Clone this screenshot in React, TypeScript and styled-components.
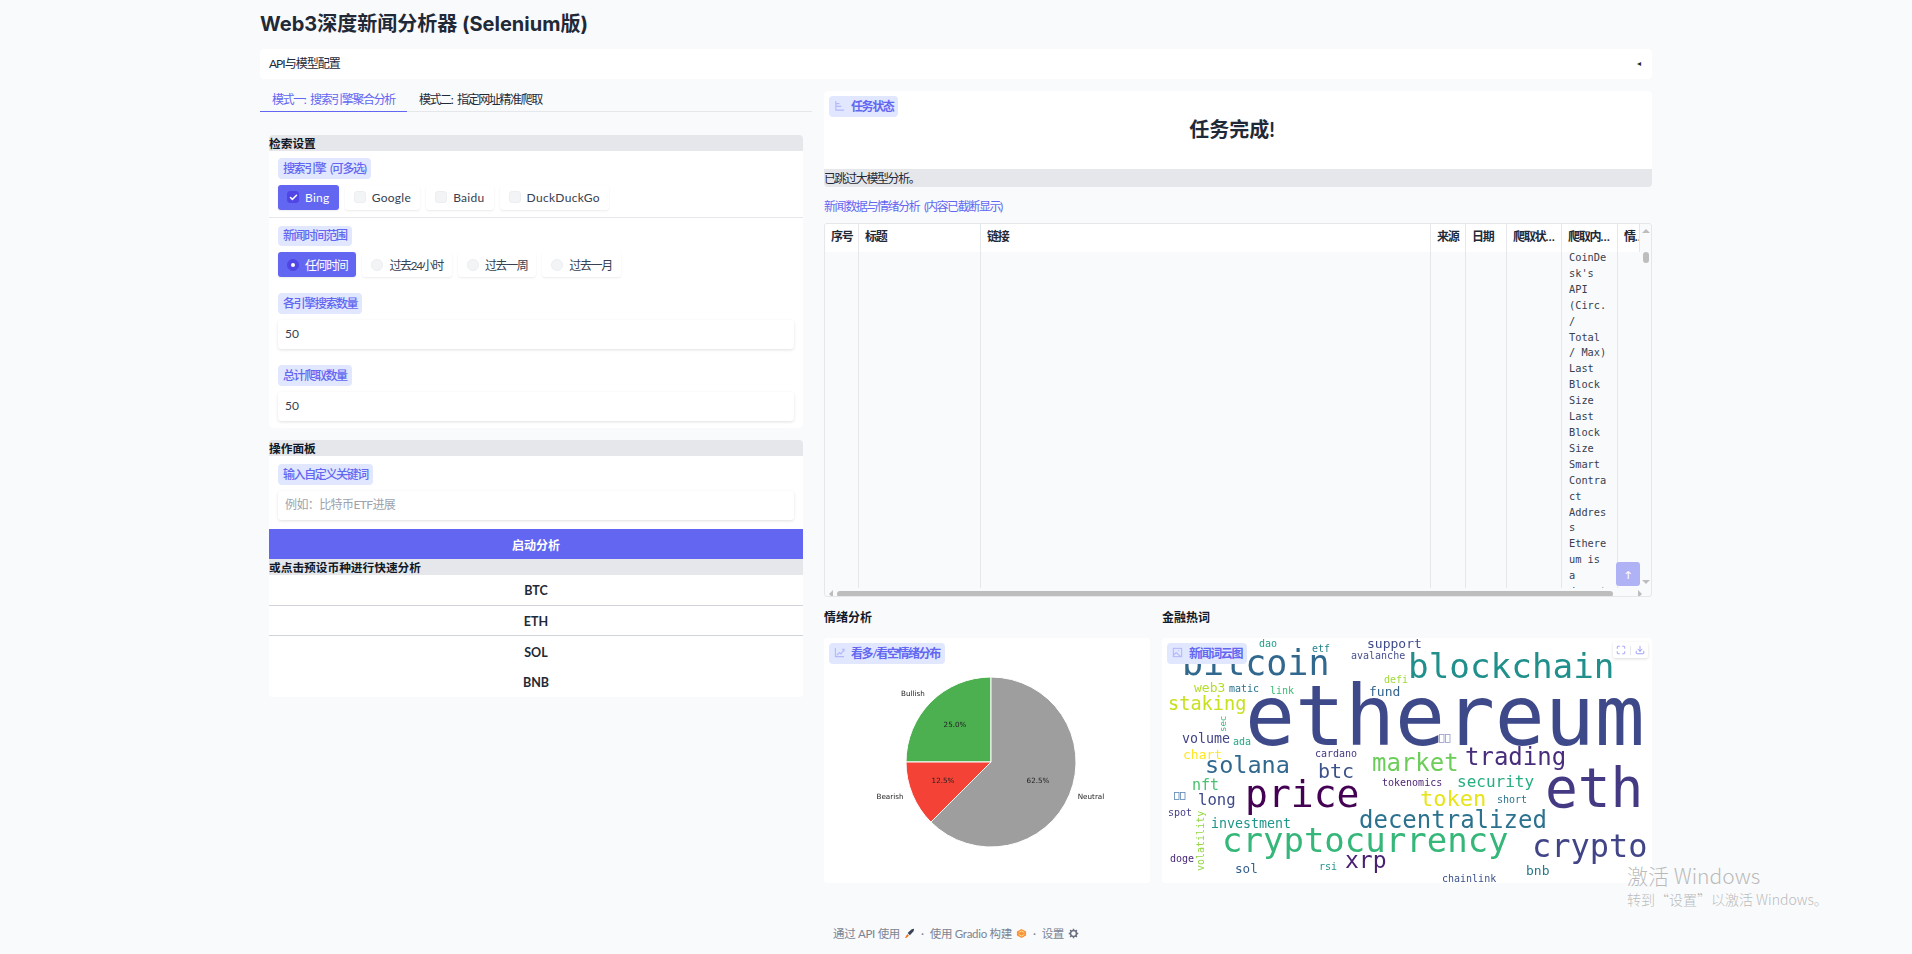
import React from 'react';
import styled, { createGlobalStyle } from 'styled-components';
import { Check, Download, Maximize } from 'lucide-react';

const BASE_FONT = `Lato, "Noto Sans CJK SC", sans-serif`;
const PRIMARY = '#6366f1';
const LABEL_BG = '#e0e7ff';
const HEADER_BG = '#e5e7eb';
const TEXT = '#1f2937';
// the reference squeezes its CJK glyphs tighter than their natural advance
const CJK_SQUEEZE = 'letter-spacing: -1.4px; word-spacing: 3px;';

const ENGINES = [
  { name: 'Bing', checked: true },
  { name: 'Google', checked: false },
  { name: 'Baidu', checked: false },
  { name: 'DuckDuckGo', checked: false },
];

const RANGES = [
  { name: '任何时间', checked: true },
  { name: '过去24小时', checked: false },
  { name: '过去一周', checked: false },
  { name: '过去一月', checked: false },
];

const COINS = ['BTC', 'ETH', 'SOL', 'BNB'];

const COLUMNS = ['序号', '标题', '链接', '来源', '日期', '爬取状态', '爬取内容', '情绪'];

const CRAWLED_TEXT =
  "CoinDesk's API (Circ. / Total / Max) Last Block Size Last Block Size Smart Contract Address Ethereum is a decentralized";

const WORDS = [
  { t: 'ethereum', x: 83, y: 107, s: 83, c: '#3e4989' },
  { t: 'bitcoin', x: 20, y: 37, s: 35, c: '#31688e' },
  { t: 'blockchain', x: 246, y: 40, s: 34.3, c: '#21908c' },
  { t: 'eth', x: 383, y: 169, s: 54.5, c: '#443a83' },
  { t: 'price', x: 83, y: 169, s: 38, c: '#440154' },
  { t: 'cryptocurrency', x: 60, y: 214, s: 34, c: '#35b779' },
  { t: 'crypto', x: 370, y: 219, s: 32, c: '#414487' },
  { t: 'decentralized', x: 197, y: 190, s: 24, c: '#2c728e' },
  { t: 'trading', x: 303, y: 127, s: 24, c: '#472d7b' },
  { t: 'market', x: 210, y: 133, s: 24, c: '#6ccd5a' },
  { t: 'solana', x: 43, y: 135, s: 23.5, c: '#31688e' },
  { t: 'btc', x: 156, y: 140, s: 20, c: '#3b518b' },
  { t: 'token', x: 258, y: 168, s: 22, c: '#e7e419' },
  { t: 'xrp', x: 183, y: 230, s: 23, c: '#482173' },
  { t: 'staking', x: 6, y: 72, s: 18.6, c: '#c8e020' },
  { t: 'fund', x: 207, y: 58, s: 13, c: '#33638d' },
  { t: 'web3', x: 32, y: 54, s: 13, c: '#b5de2b' },
  { t: 'security', x: 295, y: 149, s: 16, c: '#26ad81' },
  { t: 'long', x: 36, y: 167, s: 15.6, c: '#3e4989' },
  { t: 'nft', x: 30, y: 152, s: 15, c: '#4ac16d' },
  { t: 'support', x: 205, y: 10, s: 13, c: '#3e4a89' },
  { t: 'volume', x: 20, y: 105, s: 13.3, c: '#414487' },
  { t: 'investment', x: 49, y: 190, s: 13.3, c: '#1f968b' },
  { t: 'bnb', x: 364, y: 237, s: 13, c: '#2a788e' },
  { t: 'sol', x: 73, y: 235, s: 12.6, c: '#35608d' },
  { t: 'chart', x: 21, y: 121, s: 13, c: '#fde725' },
  { t: 'avalanche', x: 189, y: 21, s: 10, c: '#46508e' },
  { t: 'dao', x: 97, y: 9, s: 10, c: '#1f9e89' },
  { t: 'etf', x: 150, y: 14, s: 10, c: '#26828e' },
  { t: 'defi', x: 222, y: 45, s: 10, c: '#a0da39' },
  { t: 'matic', x: 67, y: 54, s: 10, c: '#2c728e' },
  { t: 'link', x: 108, y: 56, s: 10, c: '#3dbc74' },
  { t: 'ada', x: 71, y: 107, s: 10, c: '#22a884' },
  { t: 'cardano', x: 153, y: 119, s: 10, c: '#443983' },
  { t: 'tokenomics', x: 220, y: 148, s: 10, c: '#481f70' },
  { t: 'short', x: 335, y: 165, s: 10, c: '#2c728e' },
  { t: 'spot', x: 6, y: 178, s: 10, c: '#433e85' },
  { t: 'doge', x: 8, y: 224, s: 10, c: '#482878' },
  { t: 'rsi', x: 157, y: 232, s: 10, c: '#1f968b' },
  { t: 'chainlink', x: 280, y: 244, s: 10, c: '#3b528b' },
];

const GlobalStyle = createGlobalStyle`
  html, body {
    margin: 0;
    background: #f9fafb;
  }

  body {
    font-family: ${BASE_FONT};
    color: ${TEXT};
  }

  * {
    box-sizing: border-box;
  }
`;

const Page = styled.div`
  position: relative;
  width: 1912px;
  height: 954px;
  overflow: hidden;
  padding: 10px 260px 0;
`;

const Title = styled.h1`
  margin: 0 0 11px;
  height: 28px;
  font-family: Inter, "Noto Sans CJK SC", sans-serif;
  font-size: 20px;
  line-height: 28px;
  font-weight: 700;
  color: ${TEXT};
`;

const Accordion = styled.div`
  display: flex;
  justify-content: space-between;
  align-items: center;
  height: 30px;
  padding: 0 9px 3px;
  background: #fff;
  border-radius: 4px;
  font-size: 12px;
  letter-spacing: -1px;
`;

const Caret = styled.span`
  font-size: 8px;
  margin-right: 3px;
`;

const Columns = styled.div`
  display: grid;
  grid-template-columns: 552px 828px;
  gap: 12px;
  margin-top: 12px;
`;

const Tabs = styled.div`
  display: flex;
  height: 21px;
  border-bottom: 1px solid ${HEADER_BG};
`;

const Tab = styled.div<{ $active?: boolean }>`
  height: 21px;
  padding: 1px 12px 0;
  font-size: 12px;
  line-height: 16px;
  ${CJK_SQUEEZE}
  color: ${(p) => (p.$active ? PRIMARY : TEXT)};
  border-bottom: 1px solid ${(p) => (p.$active ? PRIMARY : 'transparent')};
`;

const TabPanel = styled.div`
  padding: 23px 9px 0;
`;

const SectionHeader = styled.div<{ $flat?: boolean }>`
  height: 16px;
  background: ${HEADER_BG};
  font-size: 11.7px;
  line-height: 16px;
  font-weight: 700;
  color: #111827;
  border-radius: ${(p) => (p.$flat ? '0' : '4px 4px 0 0')};
`;

const Group = styled.div`
  background: #fff;
  padding: 7px 9px 7px;
  margin-bottom: 12px;
  border-radius: 0 0 4px 4px;
`;

const Field = styled.div`
  display: flex;
  flex-direction: column;
  align-items: flex-start;
  gap: 6px;
  margin-bottom: 16px;

  &:last-child {
    margin-bottom: 0;
  }
`;

const Separated = styled.div`
  margin: 7px -9px 8px;
  height: 1px;
  background: ${HEADER_BG};
`;

const Label = styled.span`
  display: inline-flex;
  align-items: center;
  height: 20.5px;
  padding: 0 5px 2px;
  background: ${LABEL_BG};
  color: ${PRIMARY};
  font-size: 12px;
  font-weight: 500;
  ${CJK_SQUEEZE}
  border-radius: 4px;
`;

const Options = styled.div`
  display: flex;
  gap: 6px;
`;

const Option = styled.div<{ $checked?: boolean; $latin?: boolean }>`
  display: flex;
  align-items: center;
  gap: 6px;
  height: 25px;
  padding: 0 9px;
  font-size: 12px;
  ${(p) => (p.$latin ? 'letter-spacing: 0.3px;' : CJK_SQUEEZE)}
  border-radius: 3px;
  background: ${(p) => (p.$checked ? PRIMARY : '#fff')};
  color: ${(p) => (p.$checked ? '#fff' : '#374151')};
  box-shadow: 0 1px 2px rgba(0, 0, 0, 0.08);
`;

const Tick = styled.span<{ $checked?: boolean; $round?: boolean }>`
  display: flex;
  align-items: center;
  justify-content: center;
  width: 12px;
  height: 12px;
  border-radius: ${(p) => (p.$round ? '50%' : '3px')};
  background: ${(p) => (p.$checked ? '#4f46e5' : '#f3f4f6')};
  border: 1px solid ${(p) => (p.$checked ? '#4f46e5' : '#eceef2')};
  color: #fff;
`;

const Dot = styled.span`
  width: 4px;
  height: 4px;
  border-radius: 50%;
  background: #fff;
`;

const TextInput = styled.input`
  width: 100%;
  height: 29.5px;
  padding: 0 7px 2px;
  border: none;
  outline: none;
  border-radius: 3px;
  background: #fff;
  font-family: ${BASE_FONT};
  font-size: 12px;
  color: #374151;
  box-shadow: 0 1px 3px rgba(0, 0, 0, 0.12);

  &::placeholder {
    color: #9ca3af;
    opacity: 1;
    letter-spacing: -0.6px;
  }
`;

const ActionBody = styled.div`
  background: #fff;
  padding: 8px 9px 9px;
`;

const PrimaryButton = styled.button`
  display: block;
  width: 100%;
  height: 30px;
  border: none;
  background: ${PRIMARY};
  color: #fff;
  font-family: ${BASE_FONT};
  font-size: 12px;
  font-weight: 700;
`;

const CoinList = styled.div`
  background: #fff;
  border-radius: 0 0 4px 4px;
`;

const CoinRow = styled.div<{ $divided?: boolean }>`
  display: flex;
  align-items: center;
  justify-content: center;
  height: 30.5px;
  padding-top: 2px;
  font-size: 12.5px;
  font-weight: 700;
  border-bottom: ${(p) => (p.$divided ? '1px solid #d1d5db' : 'none')};
`;

const StatusCard = styled.div`
  position: relative;
  height: 78px;
  padding: 24px 12px 0 0;
  background: #fff;
  border-radius: 4px 4px 0 0;
`;

const Floating = styled(Label)`
  position: absolute;
  top: 5px;
  left: 5px;
  gap: 6px;
  padding: 0 5px 1px 5px;
  font-weight: 600;
  z-index: 1;
`;

const LabelIcon = styled.svg`
  width: 11px;
  height: 11px;
  fill: none;
  stroke: #b4b8fb;
  stroke-width: 1.2;
`;

const Done = styled.h2`
  margin: 0;
  text-align: center;
  font-size: 20px;
  line-height: 28px;
  font-weight: 700;
  color: ${TEXT};
`;

const SkipNote = styled.div`
  height: 18px;
  background: ${HEADER_BG};
  font-size: 12px;
  line-height: 19px;
  ${CJK_SQUEEZE}
  border-radius: 0 0 4px 4px;
`;

const TableCaption = styled.div`
  margin: 12px 0 8px;
  height: 16px;
  font-size: 12px;
  line-height: 16px;
  ${CJK_SQUEEZE}
  color: ${PRIMARY};
`;

const TableFrame = styled.div`
  position: relative;
  height: 374px;
  border: 1px solid ${HEADER_BG};
  border-radius: 3px;
  overflow: hidden;
`;

const TableGrid = styled.div`
  display: grid;
  grid-template-columns: 34px 122px 450px 35px 41px 55px 56px 22px;
  width: 815px;
`;

const HeadCell = styled.div`
  height: 28px;
  padding: 0 6px;
  background: #fff;
  font-size: 12px;
  line-height: 26px;
  font-weight: 700;
  letter-spacing: -1.2px;
  white-space: nowrap;
  overflow: hidden;
  text-overflow: ellipsis;
  border-right: 1px solid ${HEADER_BG};

  &:first-child {
    padding-right: 0;
  }

  &:last-child {
    padding-right: 0;
    text-overflow: clip;
    border-right: none;
  }
`;

const BodyCell = styled.div`
  height: 336px;
  padding: 0 6px 0 7px;
  overflow: hidden;
  overflow-wrap: anywhere;
  font-family: "DejaVu Sans Mono", monospace;
  font-size: 10.3px;
  line-height: 15.9px;
  color: #374151;
  border-right: 1px solid ${HEADER_BG};

  &:last-child {
    border-right: none;
  }
`;

const CellText = styled.div`
  margin-top: -2px;
`;

const HorizontalBar = styled.div`
  height: 8px;
  margin-top: 2px;
  display: flex;
  align-items: center;
  gap: 4px;
  padding: 0 0 0 4px;
`;

const HorizontalThumb = styled.div`
  width: 776px;
  height: 6px;
  border-radius: 3px;
  background: #bdbdbd;
`;

const Arrow = styled.span<{ $dir: 'left' | 'right' | 'up' | 'down' }>`
  width: 0;
  height: 0;
  border: 4px solid transparent;
  ${(p) => (p.$dir === 'left' ? 'border-right-color: #bdbdbd; border-left: none;' : '')}
  ${(p) => (p.$dir === 'right' ? 'border-left-color: #bdbdbd; border-right: none;' : '')}
  ${(p) => (p.$dir === 'up' ? 'border-bottom-color: #bdbdbd; border-top: none;' : '')}
  ${(p) => (p.$dir === 'down' ? 'border-top-color: #bdbdbd; border-bottom: none;' : '')}
`;

const RightArrow = styled(Arrow)`
  margin-left: 21px;
`;

const VerticalBar = styled.div`
  position: absolute;
  top: 0;
  right: 0;
  width: 10px;
  height: 365px;
  display: flex;
  flex-direction: column;
  align-items: center;
  justify-content: space-between;
  padding: 5px 0;
  background: #f9fafb;
`;

const VerticalThumb = styled.div`
  position: absolute;
  top: 28px;
  left: 2px;
  width: 6px;
  height: 11px;
  border-radius: 3px;
  background: #bdbdbd;
`;

const ScrollTopButton = styled.div`
  position: absolute;
  right: 11px;
  top: 338px;
  width: 24px;
  height: 24px;
  display: flex;
  align-items: center;
  justify-content: center;
  border-radius: 3px;
  background: #b0b2f6;
  color: #fff;
  font-size: 9px;
  font-weight: 700;
`;

const Charts = styled.div`
  display: grid;
  grid-template-columns: 326px 490px;
  gap: 12px;
  margin-top: 12px;
`;

const ChartTitle = styled.div`
  height: 18px;
  margin-bottom: 11px;
  font-size: 12px;
  line-height: 18px;
  font-weight: 700;
  color: #111827;
`;

const ChartCard = styled.div`
  position: relative;
  height: 245px;
  background: #fff;
  border-radius: 3px;
  overflow: hidden;
`;

const ChartSvg = styled.svg`
  display: block;
  filter: blur(0.35px);
`;

const PieLabel = styled.text`
  font-family: "DejaVu Sans", sans-serif;
  font-size: 7.2px;
  fill: #222;
  text-anchor: middle;
  dominant-baseline: middle;
`;

const CloudWord = styled.text`
  font-family: "DejaVu Sans Mono", monospace;
`;

const CloudTools = styled.div`
  position: absolute;
  top: 4px;
  right: 4px;
  display: flex;
  align-items: center;
  gap: 4px;
  height: 16px;
  padding: 0 3px;
  background: #fff;
  color: #8b8ef5;
  border-radius: 2px;
  box-shadow: 0 1px 3px rgba(0, 0, 0, 0.14);
`;

const ToolDivider = styled.span`
  width: 1px;
  height: 9px;
  background: #e5e7eb;
`;

const Footer = styled.footer`
  display: flex;
  align-items: center;
  justify-content: center;
  gap: 6px;
  width: 100%;
  margin-top: 41px;
  height: 18px;
  font-size: 11.5px;
  letter-spacing: -0.3px;
  color: #7c8493;
`;

const FooterLink = styled.span`
  display: inline-flex;
  align-items: center;
  gap: 4px;
`;

const Watermark = styled.div`
  position: absolute;
  left: 1627px;
  top: 860px;
  color: rgba(120, 120, 120, 0.5);
  font-family: "Noto Sans CJK SC", sans-serif;
  font-weight: 300;
`;

const WatermarkTitle = styled.div`
  font-size: 21px;
  line-height: 30px;
`;

const WatermarkHint = styled.div`
  font-size: 14px;
  line-height: 19px;
`;

const BarsIcon = () => (
  <LabelIcon viewBox="0 0 12 12">
    <path d="M2 1v10h9M2 4h4M2 7h6" />
  </LabelIcon>
);

const TrendIcon = () => (
  <LabelIcon viewBox="0 0 12 12">
    <path d="M1.5 1v9.5H11M3 9l3-3 1.5 1.5L11 3M8.5 2.5H11V5" />
  </LabelIcon>
);

const PictureIcon = () => (
  <LabelIcon viewBox="0 0 12 12">
    <rect x="1.5" y="1.5" width="9" height="9" />
    <path d="M1.5 9l3-3 5 4.5M7 4h.8" />
  </LabelIcon>
);

const Rocket = () => (
  <svg width="11" height="11" viewBox="0 0 12 12">
    <path d="M4 5.5 8 1.5c1-.7 2-.8 3-.8 0 1-.1 2-.8 3L6.4 7.8z" fill="#3a4256" />
    <path d="M3.6 6.6 5.4 8.4 2.8 10.6 1 11z" fill="#f97316" />
  </svg>
);

const GradioMark = () => (
  <svg width="11" height="11" viewBox="0 0 12 12">
    <path d="M6 1 11 3.8v4.4L6 11 1 8.2V3.8z" fill="#fb923c" />
    <path d="M3 5l3-1.7L9 5M3 7l3 1.7L9 7" fill="none" stroke="#fde68a" strokeWidth="1" />
  </svg>
);

const Gear = () => (
  <svg width="11" height="11" viewBox="0 0 12 12">
    <circle cx="6" cy="6" r="3.3" fill="none" stroke="#6b7280" strokeWidth="1.8" />
    <path d="M6 .8v2M6 9.2v2M.8 6h2M9.2 6h2M2.3 2.3l1.4 1.4M8.3 8.3l1.4 1.4M9.7 2.3 8.3 3.7M3.7 8.3 2.3 9.7" stroke="#6b7280" strokeWidth="1.5" />
  </svg>
);

const SentimentPie = () => (
  <ChartSvg width="326" height="245" viewBox="0 0 326 245">
    <g stroke="#fff" strokeWidth="1">
      <path d="M167 124 L167 39 A85 85 0 0 0 82 124 Z" fill="#4caf50" />
      <path d="M167 124 L82 124 A85 85 0 0 0 106.9 184.1 Z" fill="#f44336" />
      <path d="M167 124 L106.9 184.1 A85 85 0 1 0 167 39 Z" fill="#9e9e9e" />
    </g>
    <PieLabel x="89" y="56">Bullish</PieLabel>
    <PieLabel x="66" y="159">Bearish</PieLabel>
    <PieLabel x="267" y="159">Neutral</PieLabel>
    <PieLabel x="131" y="87">25.0%</PieLabel>
    <PieLabel x="119" y="143">12.5%</PieLabel>
    <PieLabel x="214" y="143">62.5%</PieLabel>
  </ChartSvg>
);

const WordCloud = () => (
  <ChartSvg width="490" height="245" viewBox="0 0 490 245">
    {WORDS.map((w) => (
      <CloudWord key={w.t} x={w.x} y={w.y} fontSize={w.s} fill={w.c}>
        {w.t}
      </CloudWord>
    ))}
    <CloudWord x="0" y="0" fontSize="9" fill="#35b779" transform="translate(64 94) rotate(-90)">
      sec
    </CloudWord>
    <CloudWord x="0" y="0" fontSize="10" fill="#93d741" transform="translate(42 233) rotate(-90)">
      volatility
    </CloudWord>
    <g fill="none" stroke="#9499c9" strokeWidth="0.8">
      <rect x="277.5" y="96.5" width="4.5" height="8" />
      <rect x="283.5" y="96.5" width="4.5" height="8" />
    </g>
    <g fill="none" stroke="#5c86b3" strokeWidth="0.8">
      <rect x="12.5" y="154.5" width="4.5" height="7" />
      <rect x="18.5" y="154.5" width="4.5" height="7" />
    </g>
  </ChartSvg>
);

export default function App() {
  return (
    <Page>
      <GlobalStyle />
      <Title>Web3深度新闻分析器 (Selenium版)</Title>
      <Accordion>
        <span>API与模型配置</span>
        <Caret>◂</Caret>
      </Accordion>

      <Columns>
        <div>
          <Tabs>
            <Tab $active>模式一: 搜索引擎聚合分析</Tab>
            <Tab>模式二: 指定网址精准爬取</Tab>
          </Tabs>
          <TabPanel>
            <SectionHeader>检索设置</SectionHeader>
            <Group>
              <Field style={{ marginBottom: 0 }}>
                <Label>搜索引擎 (可多选)</Label>
                <Options>
                  {ENGINES.map((o) => (
                    <Option key={o.name} $latin $checked={o.checked}>
                      <Tick $checked={o.checked}>{o.checked && <Check size={9} strokeWidth={4} />}</Tick>
                      {o.name}
                    </Option>
                  ))}
                </Options>
              </Field>
              <Separated />
              <Field>
                <Label>新闻时间范围</Label>
                <Options>
                  {RANGES.map((o) => (
                    <Option key={o.name} $checked={o.checked}>
                      <Tick $round $checked={o.checked}>{o.checked && <Dot />}</Tick>
                      {o.name}
                    </Option>
                  ))}
                </Options>
              </Field>
              <Field>
                <Label>各引擎搜索数量</Label>
                <TextInput defaultValue="50" />
              </Field>
              <Field>
                <Label>总计爬取数量</Label>
                <TextInput defaultValue="50" />
              </Field>
            </Group>

            <SectionHeader>操作面板</SectionHeader>
            <ActionBody>
              <Field>
                <Label>输入自定义关键词</Label>
                <TextInput placeholder="例如：比特币ETF进展" />
              </Field>
            </ActionBody>
            <PrimaryButton>启动分析</PrimaryButton>
            <SectionHeader $flat>或点击预设币种进行快速分析</SectionHeader>
            <CoinList>
              {COINS.map((coin, i) => (
                <CoinRow key={coin} $divided={i < 2}>{coin}</CoinRow>
              ))}
            </CoinList>
          </TabPanel>
        </div>

        <div>
          <StatusCard>
            <Floating><BarsIcon />任务状态</Floating>
            <Done>任务完成!</Done>
          </StatusCard>
          <SkipNote>已跳过大模型分析。</SkipNote>
          <TableCaption>新闻数据与情绪分析 (内容已截断显示)</TableCaption>
          <TableFrame>
            <TableGrid>
              {COLUMNS.map((c) => <HeadCell key={c}>{c}</HeadCell>)}
              {COLUMNS.map((c) => (
                <BodyCell key={c}>{c === '爬取内容' && <CellText>{CRAWLED_TEXT}</CellText>}</BodyCell>
              ))}
            </TableGrid>
            <HorizontalBar>
              <Arrow $dir="left" />
              <HorizontalThumb />
              <RightArrow $dir="right" />
            </HorizontalBar>
            <VerticalBar>
              <Arrow $dir="up" />
              <VerticalThumb />
              <Arrow $dir="down" />
            </VerticalBar>
            <ScrollTopButton>↑</ScrollTopButton>
          </TableFrame>

          <Charts>
            <div>
              <ChartTitle>情绪分析</ChartTitle>
              <ChartCard>
                <Floating><TrendIcon />看多/看空情绪分布</Floating>
                <SentimentPie />
              </ChartCard>
            </div>
            <div>
              <ChartTitle>金融热词</ChartTitle>
              <ChartCard>
                <Floating><PictureIcon />新闻词云图</Floating>
                <WordCloud />
                <CloudTools>
                  <Maximize size={10} />
                  <ToolDivider />
                  <Download size={10} />
                </CloudTools>
              </ChartCard>
            </div>
          </Charts>
        </div>
      </Columns>

      <Footer>
        <FooterLink>通过 API 使用 <Rocket /></FooterLink>
        <span>·</span>
        <FooterLink>使用 Gradio 构建 <GradioMark /></FooterLink>
        <span>·</span>
        <FooterLink>设置 <Gear /></FooterLink>
      </Footer>

      <Watermark>
        <WatermarkTitle>激活 Windows</WatermarkTitle>
        <WatermarkHint>转到“设置”以激活 Windows。</WatermarkHint>
      </Watermark>
    </Page>
  );
}
